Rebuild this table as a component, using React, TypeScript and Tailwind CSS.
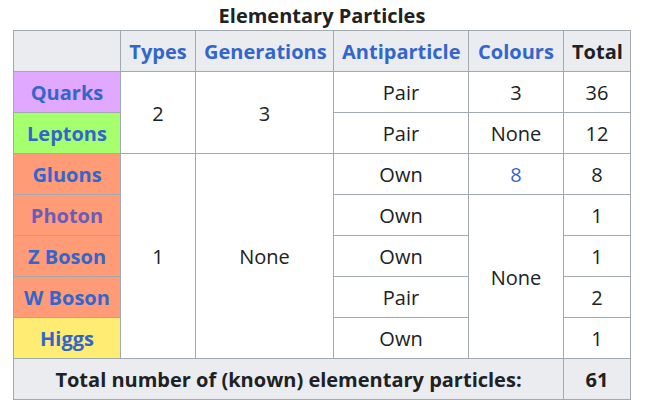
import React from "react";

const td = "border border-[#a2a9b1] px-2 pt-[5px] pb-[3px] text-center align-middle";
const th = "border border-[#a2a9b1] px-2 pt-[5px] pb-[3px] text-center align-middle font-bold";
const link = "text-[#3366cc]";

export default function App() {
  return (
    <div className="bg-white w-[650px] h-[414px] pl-[13px] pt-0" style={{ fontFamily: '"Open Sans", "Noto Sans", sans-serif' }}>
      <table className="border-collapse text-[20px] leading-[32px] text-[#202122] table-fixed w-[617px]">
        <caption className="font-bold h-[30px] leading-[31px] text-center">Elementary Particles</caption>
        <colgroup>
          <col className="w-[107px]" />
          <col className="w-[75px]" />
          <col className="w-[138px]" />
          <col className="w-[135px]" />
          <col className="w-[95px]" />
          <col className="w-[67px]" />
        </colgroup>
        <thead>
          <tr className="bg-[#eaecf0] h-[41px]">
            <th className={th}></th>
            <th className={`${th} ${link}`}>Types</th>
            <th className={`${th} ${link}`}>Generations</th>
            <th className={`${th} ${link}`}>Antiparticle</th>
            <th className={`${th} ${link}`}>Colours</th>
            <th className={th}>Total</th>
          </tr>
        </thead>
        <tbody>
          <tr className="h-[41px]">
            <th className={`${th} ${link} bg-[#e0a8ff]`}>Quarks</th>
            <td className={td} rowSpan={2}>2</td>
            <td className={td} rowSpan={2}>3</td>
            <td className={td}>Pair</td>
            <td className={td}>3</td>
            <td className={td}>36</td>
          </tr>
          <tr className="h-[41px]">
            <th className={`${th} ${link} bg-[#a6ff6c]`}>Leptons</th>
            <td className={td}>Pair</td>
            <td className={td}>None</td>
            <td className={td}>12</td>
          </tr>
          <tr className="h-[41px]">
            <th className={`${th} ${link} bg-[#ff9b77]`}>Gluons</th>
            <td className={td} rowSpan={5}>1</td>
            <td className={td} rowSpan={5}>None</td>
            <td className={td}>Own</td>
            <td className={`${td} ${link}`}>8</td>
            <td className={td}>8</td>
          </tr>
          <tr className="h-[41px]">
            <th className={`${th} text-[#6b5cb8] bg-[#ff9b77]`}>Photon</th>
            <td className={td}>Own</td>
            <td className={td} rowSpan={4}>None</td>
            <td className={td}>1</td>
          </tr>
          <tr className="h-[41px]">
            <th className={`${th} ${link} bg-[#ff9b77]`}>Z Boson</th>
            <td className={td}>Own</td>
            <td className={td}>1</td>
          </tr>
          <tr className="h-[41px]">
            <th className={`${th} ${link} bg-[#ff9b77]`}>W Boson</th>
            <td className={td}>Pair</td>
            <td className={td}>2</td>
          </tr>
          <tr className="h-[41px]">
            <th className={`${th} ${link} bg-[#ffec73]`}>Higgs</th>
            <td className={td}>Own</td>
            <td className={td}>1</td>
          </tr>
          <tr className="h-[41px] bg-[#eaecf0]">
            <th className={th} colSpan={5}>Total number of (known) elementary particles:</th>
            <th className={th}>61</th>
          </tr>
        </tbody>
      </table>
    </div>
  );
}
